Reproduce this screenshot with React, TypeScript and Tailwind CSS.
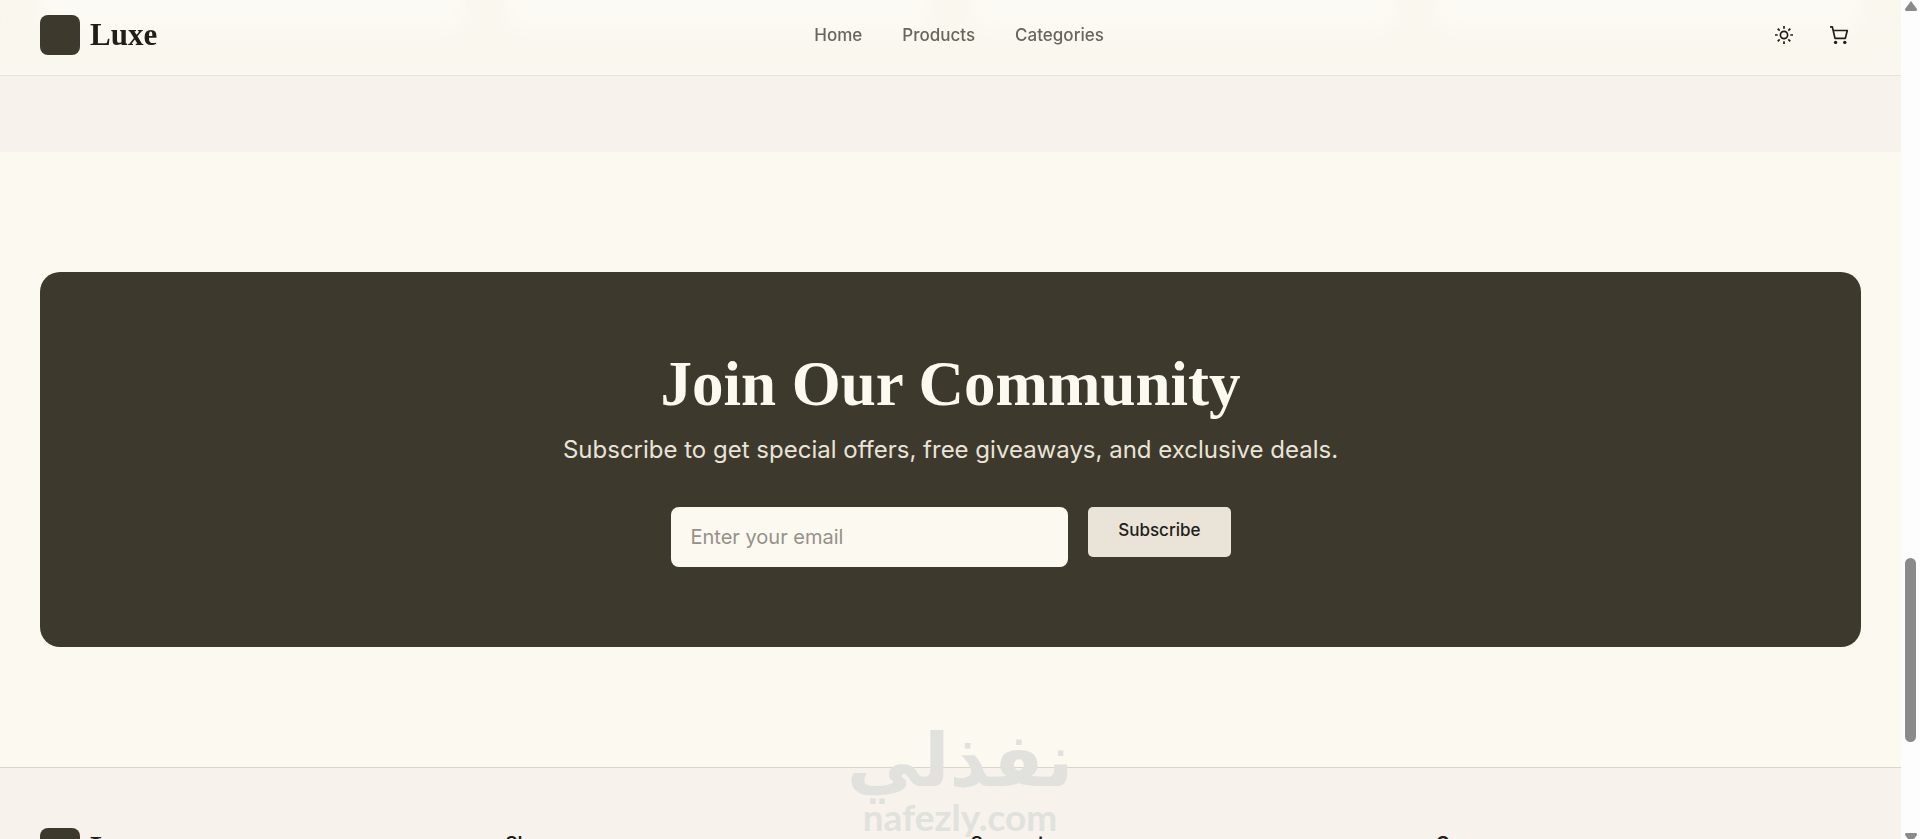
const navLinks = ["Home", "Products", "Categories"];
const footerColumns = ["Shop", "Support", "Company"];

const SunIcon = () => (
	<svg
		viewBox="0 0 20 20"
		className="size-5"
		fill="none"
		stroke="currentColor"
		strokeWidth="1.7"
		aria-hidden="true"
	>
		<circle cx="10" cy="10" r="3.6" />
		<path d="M10 1v2.7M10 16.3V19M1 10h2.7M16.3 10H19M3.7 3.7l2 2M14.3 14.3l2 2M3.7 16.3l2-2M14.3 5.7l2-2" />
	</svg>
);

const CartIcon = () => (
	<svg
		viewBox="0 0 20 20"
		className="size-5"
		fill="none"
		stroke="currentColor"
		strokeWidth="1.7"
		strokeLinejoin="round"
		aria-hidden="true"
	>
		<path d="M1 1.8h2.3l2.7 11.6h10.3l2-7.9H4.2" />
		<circle cx="6.6" cy="17.4" r="1.7" fill="currentColor" stroke="none" />
		<circle cx="15.8" cy="17.4" r="1.7" fill="currentColor" stroke="none" />
	</svg>
);

const Logo = () => (
	<a href="#" className="flex items-center gap-[10px]">
		<span className="size-10 rounded-lg bg-[#3e392d]" />
		<span className="font-['Liberation_Serif',serif] text-[31px] leading-10 font-bold">
			Luxe
		</span>
	</a>
);

const Header = () => (
	<header className="absolute inset-x-0 top-0 z-10 border-b border-[#e8e4dd] bg-[#fbf8ef]/70 backdrop-blur-md">
		<div className="flex items-center justify-between px-10 pt-[15px] pb-5">
			<Logo />
			<nav className="flex gap-10 text-[17px] leading-6 font-medium text-[#69655d]">
				{navLinks.map((link) => (
					<a key={link} href="#">
						{link}
					</a>
				))}
			</nav>
			<div className="flex gap-[10px]">
				<button
					type="button"
					aria-label="Toggle theme"
					className="flex h-10 w-[45px] items-center justify-center"
				>
					<SunIcon />
				</button>
				<button
					type="button"
					aria-label="Cart"
					className="flex h-10 w-[45px] items-center justify-center"
				>
					<CartIcon />
				</button>
			</div>
		</div>
	</header>
);

const ProductsSection = () => (
	<section className="grid grid-cols-4 gap-10 bg-[#f7f3ec] px-10 pb-[120px]">
		{[1, 2, 3, 4].map((card) => (
			<div key={card} className="h-8 rounded-b-xl bg-white" />
		))}
	</section>
);

const Newsletter = () => (
	<section className="px-10 py-[120px]">
		<div className="rounded-[20px] bg-[#3e392d] px-10 py-20 text-center">
			<h2 className="mb-4 font-['Liberation_Serif',serif] text-[63px] leading-[64px] font-bold text-[#fcf9f0]">
				Join Our Community
			</h2>
			<p className="mb-10 text-[24px] leading-[35px] text-[#e9e4d8]">
				Subscribe to get special offers, free giveaways, and exclusive deals.
			</p>
			<form
				className="mx-auto flex max-w-[560px] items-start gap-5"
				onSubmit={(e) => e.preventDefault()}
			>
				<input
					type="email"
					aria-label="Email"
					placeholder="Enter your email"
					className="h-[60px] min-w-0 flex-1 rounded-lg bg-[#fcf9f0] px-5 text-[20px] text-[#211e19] placeholder:text-[#94918a]"
				/>
				<button
					type="submit"
					className="h-[50px] rounded-[5px] bg-[#eae3d7] px-[30px] pb-[2px] text-[17px] font-medium"
				>
					Subscribe
				</button>
			</form>
		</div>
	</section>
);

const Footer = () => (
	<footer className="flex-1 border-t border-[#d9d6ce] bg-[#f7f3ec] px-10 pt-[60px]">
		<div className="grid grid-cols-4 gap-10">
			<Logo />
			{footerColumns.map((title) => (
				<h3 key={title} className="text-[19px] leading-8 font-semibold">
					{title}
				</h3>
			))}
		</div>
	</footer>
);

const Watermark = () => (
	<div className="pointer-events-none absolute inset-x-0 bottom-0 flex flex-col items-center pb-[2px] font-['DejaVu_Sans',sans-serif] font-bold text-[#e1e1de]">
		<span dir="rtl" lang="ar" className="text-[74px] leading-[74px]">
			نفذلي
		</span>
		<span className="font-['Lato',sans-serif] text-[37px] leading-10">
			nafezly.com
		</span>
	</div>
);

const ScrollTrack = () => (
	<div className="flex w-[19px] shrink-0 flex-col items-center justify-between bg-[#fdfdfd] text-[#8a8a8a]">
		<svg viewBox="0 0 12 10" className="mt-px h-[10px] w-3" fill="currentColor">
			<path d="M6 0 12 8q0 2-1 2H1Q0 10 0 8Z" />
		</svg>
		<div className="flex w-full flex-1 flex-col items-center">
			<div className="flex-[547]" />
			<div className="w-[11px] flex-[184] rounded-full bg-[#8a8a8a]" />
			<div className="flex-[91]" />
		</div>
		<svg viewBox="0 0 12 6" className="h-[6px] w-3" fill="currentColor">
			<path d="M1 0h10q1 0 1 2L9 6H3L0 2Q0 0 1 0Z" />
		</svg>
	</div>
);

const App = () => (
	<div className="flex h-screen overflow-hidden bg-[#fcf9f0] font-['Inter','Liberation_Sans',sans-serif] text-[#211e19]">
		<div className="relative flex min-w-0 flex-1 flex-col overflow-hidden">
			<Header />
			<ProductsSection />
			<Newsletter />
			<Footer />
		</div>
		<ScrollTrack />
		<div className="pointer-events-none absolute inset-0">
			<Watermark />
		</div>
	</div>
);

export default App;
